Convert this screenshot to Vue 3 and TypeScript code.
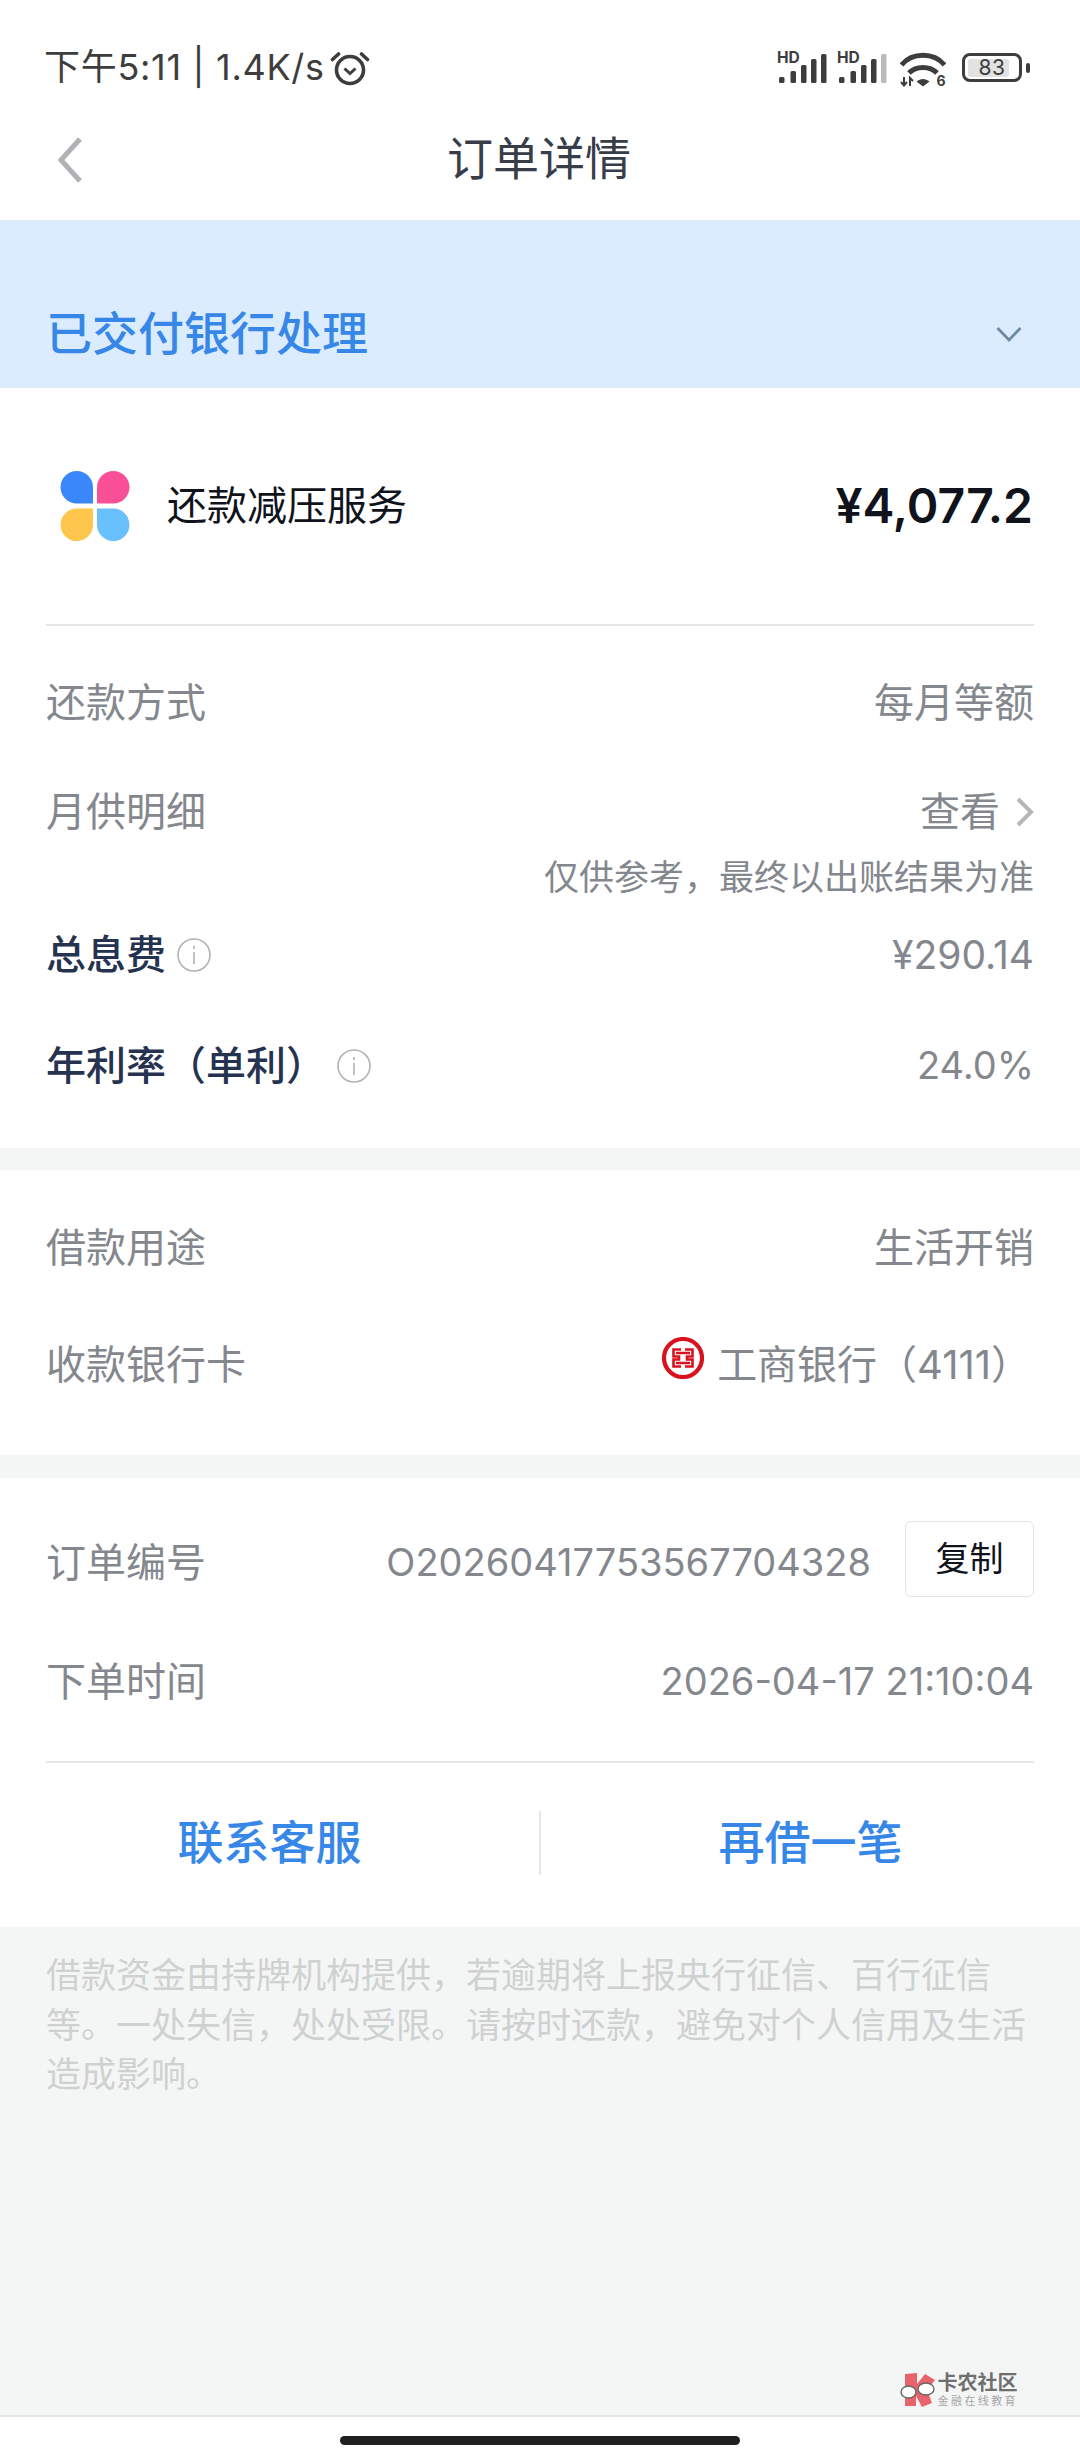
<script setup lang="ts">
interface Row {
  label: string;
  value: string;
}

const payRow: Row = { label: "还款方式", value: "每月等额" };
const disclaimer =
  "借款资金由持牌机构提供，若逾期将上报央行征信、百行征信等。一处失信，处处受限。请按时还款，避免对个人信用及生活造成影响。";
const signalBars = [
  { x: 2, y: 25, h: 6 },
  { x: 13.5, y: 19, h: 12 },
  { x: 24, y: 13, h: 18 },
  { x: 34, y: 7, h: 24 },
  { x: 44, y: 2, h: 29 },
];
</script>

<template>
  <div class="page">
    <header class="status">
      <div class="status-left">
        <span>下午5:11 | 1.4K/s</span>
        <svg width="40" height="36" viewBox="0 0 40 36" fill="none" stroke="#3d3d3d">
          <circle cx="20" cy="20" r="13.500" stroke-width="3.600" />
          <path d="M14.500 18.500l5.500 5 5.500-5" stroke-width="3" />
          <path d="M2.500 9.500l6-5.500M37.500 9.500l-6-5.500" stroke-width="3.600" stroke-linecap="round" />
        </svg>
      </div>
      <div class="status-right">
        <svg v-for="n in 2" :key="n" class="signal" width="50" height="42" viewBox="0 -8 50 42">
          <text x="0" y="11" class="hd">HD</text>
          <rect
            v-for="(b, i) in signalBars"
            :key="i"
            :x="b.x"
            :y="b.y"
            width="5.500"
            :height="b.h"
            rx="1.500"
            :fill="n === 2 && i === 4 ? '#bbbbbb' : '#3d3d3d'"
          />
        </svg>
        <svg class="wifi" width="46" height="42" viewBox="0 0 46 42" fill="none" stroke="#3d3d3d">
          <path d="M1.500 13C12 0 34 0 44.500 13" stroke-width="5" />
          <path d="M9 21c7-7.500 21-7.500 28 0" stroke-width="5" />
          <path d="M16.500 29.500c4-3.500 9-3.500 13 0L23 34.500z" fill="#3d3d3d" stroke="none" />
          <path d="M4 25v8M1 30l3 3.500L7 30M10 34v-8l3 3" stroke-width="2" />
          <text x="36.500" y="34" class="wifi-six">6</text>
        </svg>
        <div class="battery">
          <div class="battery-body">
            <div class="battery-fill"></div>
            <span class="battery-num">83</span>
          </div>
          <div class="battery-cap"></div>
        </div>
      </div>
    </header>

    <nav class="nav">
      <svg class="back" width="28" height="48" viewBox="0 0 28 48" fill="none">
        <path d="M24 3L5 24l19 21" stroke="#b0b2b6" stroke-width="5" />
      </svg>
      <h1 class="title">订单详情</h1>
    </nav>

    <section class="banner">
      <span class="banner-text">已交付银行处理</span>
      <svg width="26" height="16" viewBox="0 0 26 16" fill="none">
        <path d="M1.500 2L13 14 24.500 2" stroke="#6f8ba3" stroke-width="2.800" />
      </svg>
    </section>

    <section class="card card-first">
      <div class="service">
        <div class="service-name">
          <svg width="70" height="71" viewBox="0 0 68 70">
            <path d="M32 32V16A16 16 0 1 0 16 32z" fill="#3a87fb" />
            <path d="M36 32V16a16 16 0 1 1 16 16z" fill="#f94f96" />
            <path d="M32 37v17a16 16 0 1 1-16-17z" fill="#fec64c" />
            <path d="M36 37v17a16 16 0 1 0 16-17z" fill="#68c0fd" />
          </svg>
          <span>还款减压服务</span>
        </div>
        <span class="amount">¥4,077.2</span>
      </div>
      <div class="line"></div>

      <div class="row row-pay">
        <span class="label">{{ payRow.label }}</span>
        <span class="value cjk">{{ payRow.value }}</span>
      </div>
      <div class="row row-month">
        <span class="label">月供明细</span>
        <span class="value cjk view">
          查看
          <svg width="20" height="32" viewBox="0 0 20 32" fill="none">
            <path d="M3 3l13 13L3 29" stroke="#b4b6b8" stroke-width="4" />
          </svg>
        </span>
      </div>
      <p class="note">仅供参考，最终以出账结果为准</p>
      <div class="row row-fee">
        <span class="label strong">
          总息费
          <svg class="info" width="34" height="34" viewBox="0 0 34 34" fill="none">
            <circle cx="17" cy="17" r="16" stroke="#b0b3b7" stroke-width="1.600" />
            <path d="M17 14v12M17 8v3" stroke="#b0b3b7" stroke-width="1.600" />
          </svg>
        </span>
        <span class="value digits">¥290.14</span>
      </div>
      <div class="row row-rate">
        <span class="label strong">
          年利率（单利）
          <svg class="info" width="34" height="34" viewBox="0 0 34 34" fill="none">
            <circle cx="17" cy="17" r="16" stroke="#b0b3b7" stroke-width="1.600" />
            <path d="M17 14v12M17 8v3" stroke="#b0b3b7" stroke-width="1.600" />
          </svg>
        </span>
        <span class="value">24.0%</span>
      </div>
    </section>

    <section class="card card-second">
      <div class="row row-use">
        <span class="label">借款用途</span>
        <span class="value cjk">生活开销</span>
      </div>
      <div class="row row-bank">
        <span class="label">收款银行卡</span>
        <span class="value cjk bank">
          <svg class="bank-logo" width="42" height="42" viewBox="0 0 42 42" fill="none">
            <circle cx="21" cy="21" r="19" fill="#fff" stroke="#d9121f" stroke-width="4.200" />
            <g stroke="#d9121f" stroke-width="2.600">
              <path d="M19 12.500h-7.500v7H17v3h-5.500v7H19" />
              <path d="M23 12.500h7.500v7H25v3h5.500v7H23" />
              <path d="M14 16h14M14 26h14" />
            </g>
          </svg>
          工商银行（4111）
        </span>
      </div>
    </section>

    <section class="card card-third">
      <div class="row row-order">
        <span class="label">订单编号</span>
        <span class="order-right">
          <span class="value">O20260417753567704328</span>
          <button class="copy">复制</button>
        </span>
      </div>
      <div class="row row-time">
        <span class="label">下单时间</span>
        <span class="value">2026-04-17 21:10:04</span>
      </div>
      <div class="line"></div>
      <div class="actions">
        <span class="action">联系客服</span>
        <span class="action-sep"></span>
        <span class="action">再借一笔</span>
      </div>
    </section>

    <footer class="foot">
      <p class="disclaimer">{{ disclaimer }}</p>
      <div class="mark">
        <svg width="36" height="35" viewBox="0 0 36 35">
          <path d="M5 1l12-1v11l8-10 10 6-8 10 5 13-10 4-6-11v10H5z" fill="#e8636b" />
          <ellipse cx="8.500" cy="19" rx="7.500" ry="6" fill="#fff" stroke="#666" stroke-width="1.400" />
          <ellipse cx="26" cy="16" rx="8" ry="6" fill="#fff" stroke="#666" stroke-width="1.400" />
        </svg>
        <div class="mark-text">
          <span class="mark-big">卡农社区</span>
          <span class="mark-small">金融在线教育</span>
        </div>
      </div>
    </footer>

    <div class="home">
      <div class="home-bar"></div>
    </div>
  </div>
</template>

<style>
html,
body {
  margin: 0;
  background: #fff;
}
</style>

<style scoped>
.page {
  width: 1080px;
  height: 2460px;
  display: flex;
  flex-direction: column;
  background: #f4f6f6;
  font-family: Inter, "Noto Sans CJK SC", sans-serif;
  line-height: 1.2;
}

.status {
  height: 136px;
  box-sizing: border-box;
  padding: 46px 50px 0 44px;
  display: flex;
  justify-content: space-between;
  align-items: flex-start;
  background: #fff;
}

.status-left {
  display: flex;
  align-items: center;
  height: 44px;
  gap: 5px;
  font-size: 36px;
  color: #3d3d3d;
  letter-spacing: 0.7px;
}

.status-right {
  display: flex;
  align-items: flex-start;
  padding-top: 6px;
}

.signal {
  margin: -8px 10px 0 0;
}

.hd {
  font: 700 15.500px Inter, sans-serif;
  fill: #3d3d3d;
}

.wifi {
  margin: 0 16px 0 3px;
}

.wifi-six {
  font: 700 14px Inter, sans-serif;
  fill: #3d3d3d;
  stroke: none;
}

.battery {
  display: flex;
  align-items: center;
  gap: 4px;
  margin-top: 1px;
}

.battery-body {
  position: relative;
  width: 60px;
  height: 29px;
  box-sizing: border-box;
  border: 3px solid #3d3d3d;
  border-radius: 8px;
  display: flex;
  align-items: center;
  justify-content: center;
}

.battery-fill {
  position: absolute;
  left: 3px;
  top: 3px;
  bottom: 2px;
  width: 41px;
  background: #e2e2e2;
  border-radius: 2px;
}

.battery-num {
  position: relative;
  font-size: 21px;
  letter-spacing: 0.5px;
  color: #3d3d3d;
}

.battery-cap {
  width: 4px;
  height: 10px;
  background: #3d3d3d;
  border-radius: 2px;
}

.nav {
  height: 84px;
  position: relative;
  display: flex;
  align-items: center;
  justify-content: center;
  background: #fff;
}

.back {
  position: absolute;
  left: 56px;
  top: 0;
}

.title {
  margin: 0 2px 38px 0;
  font-size: 46px;
  font-weight: 400;
  color: #373d49;
}

.banner {
  height: 168px;
  box-sizing: border-box;
  padding: 0 58px 27px 46px;
  background: #dbecfe;
  display: flex;
  align-items: flex-end;
  justify-content: space-between;
}

.banner svg {
  margin-bottom: 19px;
}

.banner-text {
  font-size: 46px;
  line-height: 56px;
  font-weight: 500;
  color: #3787e8;
}

.card {
  padding: 0 46px;
  background: #fff;
}

.card-first {
  padding-bottom: 29px;
}

.card-second {
  margin-top: 22px;
  padding-top: 20px;
  padding-bottom: 31px;
}

.card-third {
  margin-top: 23px;
  padding-top: 25px;
}

.service {
  height: 236px;
  display: flex;
  align-items: center;
  justify-content: space-between;
}

.service-name {
  display: flex;
  align-items: center;
  gap: 37px;
  padding-left: 14px;
  font-size: 40px;
  color: #10131c;
}

.amount {
  margin-right: 1px;
  font-size: 48px;
  font-weight: 600;
  color: #10131c;
}

.line {
  height: 2px;
  background: #e6e7e9;
}

.row {
  display: flex;
  align-items: center;
  justify-content: space-between;
}

.row-pay {
  margin-top: 22px;
  height: 110px;
}

.row-month {
  height: 50px;
  margin-top: 29px;
}

.row-fee {
  height: 116px;
}

.row-rate {
  height: 106px;
}

.row-use {
  height: 116px;
}

.row-bank {
  height: 118px;
}

.row-order {
  height: 120px;
}

.row-time {
  height: 118px;
  margin-bottom: 20px;
}

.label {
  display: flex;
  align-items: center;
  font-size: 40px;
  color: #84888e;
}

.label.strong {
  color: #253350;
  font-weight: 500;
}

.info {
  margin-left: 11px;
}

.value {
  font-size: 38px;
  color: #84888e;
}

.value.cjk {
  font-size: 40px;
}

.value.digits {
  font-size: 39px;
}

.view {
  display: flex;
  align-items: center;
  gap: 15px;
  margin-right: -1px;
}

.note {
  margin: 20px 0 0;
  font-size: 35px;
  line-height: 40px;
  text-align: right;
  color: #84888e;
}

.bank {
  display: flex;
  align-items: center;
  gap: 13px;
  margin-right: 3px;
}

.bank-logo {
  margin-bottom: 14px;
}

.order-right {
  display: flex;
  align-items: center;
  gap: 34px;
}

.copy {
  width: 129px;
  height: 76px;
  padding: 0;
  margin-bottom: 8px;
  box-sizing: border-box;
  background: #fff;
  border: 1.500px solid #e2e3e5;
  border-radius: 6px;
  font-family: inherit;
  font-size: 34px;
  line-height: 1.2;
  color: #10131c;
}

.actions {
  height: 160px;
  margin: 0 -46px 4px;
  display: flex;
  align-items: center;
}

.action {
  flex: 1;
  text-align: center;
  font-size: 46px;
  font-weight: 500;
  color: #3787e8;
}

.action-sep {
  width: 2px;
  height: 64px;
  background: #e6e7e9;
}

.foot {
  flex: 1;
  position: relative;
  box-sizing: border-box;
  padding: 24px 46px 0;
  border-bottom: 2px solid #e4e5e5;
}

.disclaimer {
  margin: 0;
  font-size: 35px;
  line-height: 49.500px;
  color: #cfd1d1;
}

.mark {
  position: absolute;
  right: 62px;
  bottom: 7px;
  display: flex;
  align-items: center;
  gap: 2px;
}

.mark-text {
  display: flex;
  flex-direction: column;
  gap: 2px;
}

.mark-big {
  font-size: 20px;
  line-height: 20px;
  font-weight: 700;
  color: #6f6f6f;
}

.mark-small {
  font-size: 11px;
  line-height: 13px;
  letter-spacing: 2.400px;
  color: #a5a5a5;
}

.home {
  height: 43px;
  display: flex;
  justify-content: center;
  padding-top: 19px;
  box-sizing: border-box;
  background: #fff;
}

.home-bar {
  width: 400px;
  height: 9px;
  border-radius: 5px;
  background: #1f1f1f;
}
</style>
